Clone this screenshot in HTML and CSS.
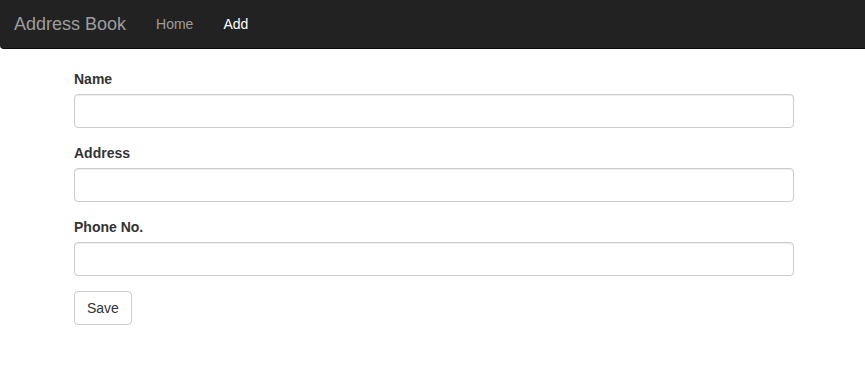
FILE: index.html
```html
<!DOCTYPE html>
<html>
<head>
<meta charset="utf-8">
<title>Address Book</title>
<link rel="stylesheet" href="styles.css">
</head>
<body>
<nav class="navbar">
  <a class="brand" href="#">Address Book</a>
  <ul class="nav">
    <li><a href="#">Home</a></li>
    <li><a href="#" class="active">Add</a></li>
  </ul>
</nav>
<main class="container">
  <form>
    <div class="form-group">
      <label for="name">Name</label>
      <input id="name" type="text" class="form-control">
    </div>
    <div class="form-group">
      <label for="address">Address</label>
      <input id="address" type="text" class="form-control">
    </div>
    <div class="form-group">
      <label for="phone">Phone No.</label>
      <input id="phone" type="text" class="form-control">
    </div>
    <button type="button" class="btn">Save</button>
  </form>
</main>
</body>
</html>
```
FILE: styles.css
```css
* { box-sizing: border-box; }
html, body { margin: 0; padding: 0; }
body {
  font-family: "Liberation Sans", Arial, sans-serif;
  font-size: 14px;
  line-height: 20px;
  color: #333;
  background: #fff;
}
.navbar {
  display: flex;
  align-items: center;
  height: 49px;
  background: #222;
  border-bottom: 1px solid #080808;
  border-radius: 0 0 0 4px;
  padding-left: 14px;
}
.brand {
  font-size: 18px;
  color: #9d9d9d;
  text-decoration: none;
  line-height: 20px;
  margin-right: 15px;
}
.nav {
  display: flex;
  list-style: none;
  margin: 0;
  padding: 0;
}
.nav a {
  display: block;
  padding: 0 15px;
  color: #9d9d9d;
  text-decoration: none;
  line-height: 20px;
}
.nav a.active { color: #fff; }
.container {
  width: 720px;
  margin: 20px 0 0 74px;
}
.form-group { margin-bottom: 15px; }
label {
  display: block;
  font-weight: bold;
  margin-bottom: 5px;
  line-height: 20px;
}
.form-control {
  display: block;
  width: 100%;
  height: 34px;
  padding: 6px 12px;
  font: inherit;
  border: 1px solid #ccc;
  border-radius: 4px;
  box-shadow: inset 0 1px 1px rgba(0,0,0,.075);
  background: #fff;
}
.btn {
  display: inline-block;
  height: 34px;
  padding: 6px 12px;
  font: inherit;
  color: #333;
  background: #fff;
  border: 1px solid #ccc;
  border-radius: 4px;
  cursor: pointer;
}
```
